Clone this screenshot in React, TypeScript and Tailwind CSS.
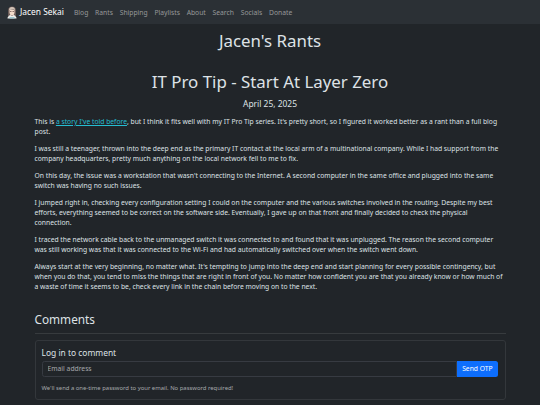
import React from "react";

const navLinks = ["Blog", "Rants", "Shipping", "Playlists", "About", "Search", "Socials", "Donate"];

const paragraphs = [
  "I was still a teenager, thrown into the deep end as the primary IT contact at the local arm of a multinational company. While I had support from the company headquarters, pretty much anything on the local network fell to me to fix.",
  "On this day, the issue was a workstation that wasn't connecting to the Internet. A second computer in the same office and plugged into the same switch was having no such issues.",
  "I jumped right in, checking every configuration setting I could on the computer and the various switches involved in the routing. Despite my best efforts, everything seemed to be correct on the software side. Eventually, I gave up on that front and finally decided to check the physical connection.",
  "I traced the network cable back to the unmanaged switch it was connected to and found that it was unplugged. The reason the second computer was still working was that it was connected to the Wi-Fi and had automatically switched over when the switch went down.",
  "Always start at the very beginning, no matter what. It's tempting to jump into the deep end and start planning for every possible contingency, but when you do that, you tend to miss the things that are right in front of you. No matter how confident you are that you already know or how much of a waste of time it seems to be, check every link in the chain before moving on to the next.",
];

function Avatar() {
  return (
    <svg viewBox="0 0 20 26" className="mr-[3px] h-[13px] w-[10px]">
      <path d="M2 20V8Q3 1 10 1t8 7v12z" fill="#6d5c58" />
      <path d="M4 8Q4 2 10 2t6 6l-3-1-7 1z" fill="#d3c4b8" />
      <path d="M5 8h10v6q-1 5-5 5t-5-5z" fill="#f3dccb" />
      <path d="M6 10h3v2H6zM11 10h3v2h-3z" fill="#8b706a" />
      <path d="M1 25q0-5 6-7l3 2 3-2q6 2 6 7z" fill="#f0eeeb" />
      <path d="M5 22h10v3H5z" fill="#9fc9d3" />
    </svg>
  );
}

function Navbar() {
  return (
    <nav className="flex h-[24px] items-center bg-[#2b3035] pl-[7px]">
      <Avatar />
      <a href="#" className="mr-[10px] text-[8.44px] text-white">Jacen Sekai</a>
      <ul className="flex gap-[6.75px] pt-[1.6px] text-[6.75px] text-[#969899]">
        {navLinks.map((link) => (
          <li key={link}>
            <a href="#">{link}</a>
          </li>
        ))}
      </ul>
    </nav>
  );
}

function Comments() {
  return (
    <section>
      <h3 className="text-[11.8px] leading-[14.2px]">Comments</h3>
      <hr className="mt-[6px] border-[#373b3e]" />
      <div className="mt-[6.5px] h-[60px] rounded-[3px] border border-[#33373b] pt-[6.5px] pr-[6.6px] pl-[6px]">
        <h5 className="text-[8.44px] leading-[10px]">Log in to comment</h5>
        <form className="mt-[3.6px] flex h-[16px]">
          <input
            type="email"
            placeholder="Email address"
            className="min-w-0 flex-1 rounded-l-[2.5px] border border-[#373b42] px-[5px] text-[6.75px] placeholder:text-[#a5a8ab]"
          />
          <button type="button" className="w-[41px] rounded-r-[2.5px] bg-[#0d6efd] text-[6.75px] text-white">
            Send OTP
          </button>
        </form>
        <p className="mt-[6.7px] text-[5.9px] leading-[9px] text-[#a6a9ac]">
          We'll send a one-time password to your email. No password required!
        </p>
      </div>
    </section>
  );
}

export default function App() {
  return (
    <div className="h-[405px] overflow-hidden bg-[#212529] font-['Noto_Sans',sans-serif] text-[6.75px] leading-[10.125px] text-[#dee2e6]">
      <Navbar />
      <main className="mx-auto w-[471px] pt-[7.4px]">
        <h1 className="text-center text-[16.875px] leading-[20.25px]">Jacen's Rants</h1>
        <h1 className="mt-[20.65px] text-center text-[16.875px] leading-[20.25px]">IT Pro Tip - Start At Layer Zero</h1>
        <h5 className="mt-[6.3px] text-center text-[8.44px] leading-[10px]">April 25, 2025</h5>
        <article className="mt-[8.1px] mb-[19.9px] flex flex-col gap-[6.75px]">
          <p>
            This is <a href="#" className="text-[#25bdd2] underline">a story I've told before</a>, but I think it fits well with my IT Pro Tip series. It's pretty short, so I figured it worked better as a rant than a full blog post.
          </p>
          {paragraphs.map((text, index) => (
            <p key={index}>{text}</p>
          ))}
        </article>
        <Comments />
      </main>
    </div>
  );
}
